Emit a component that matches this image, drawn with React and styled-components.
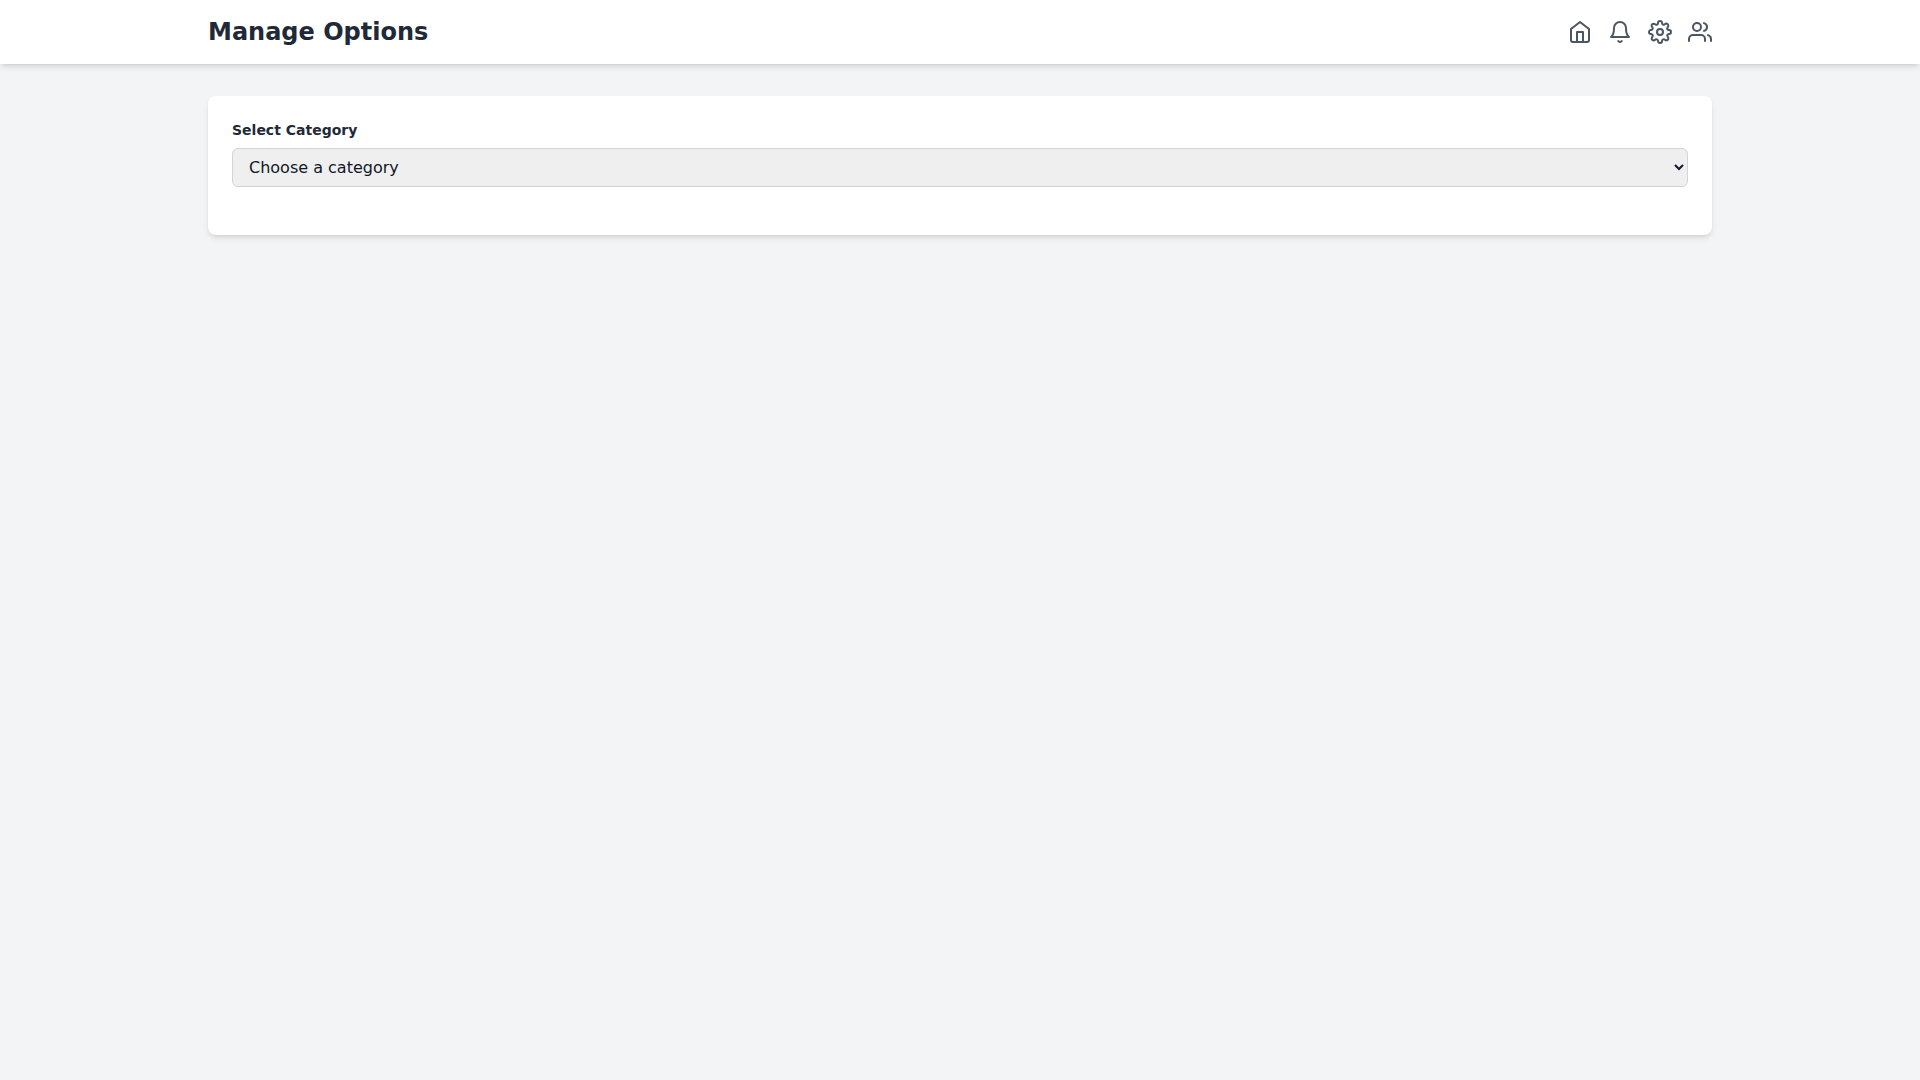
import { useState } from 'react';
import styled, { createGlobalStyle } from 'styled-components';
import { FiHome, FiBell, FiSettings, FiUsers } from 'react-icons/fi';

const GlobalStyle = createGlobalStyle`
  *,
  *::before,
  *::after {
    box-sizing: border-box;
  }

  body {
    margin: 0;
    font-family: 'DejaVu Sans', sans-serif;
    line-height: 1.5;
    color: #1f2937;
    background-color: #f3f4f6;
  }
`;

const Header = styled.header`
  background-color: #ffffff;
  box-shadow: 0 4px 6px -1px rgba(0, 0, 0, 0.1),
    0 2px 4px -2px rgba(0, 0, 0, 0.1);
`;

const HeaderInner = styled.div`
  display: flex;
  justify-content: space-between;
  align-items: center;
  max-width: 1536px;
  margin: 0 auto;
  padding: 16px;
`;

const Title = styled.h1`
  margin: 0;
  font-size: 24px;
  line-height: 32px;
  font-weight: 700;
`;

const Nav = styled.nav`
  display: flex;
  column-gap: 16px;
`;

const NavLink = styled.a`
  display: flex;
  color: #4b5563;

  &:hover {
    color: #1f2937;
  }
`;

const Main = styled.main`
  max-width: 1536px;
  margin: 0 auto;
  padding: 32px 16px;
`;

const Card = styled.section`
  padding: 24px;
  background-color: #ffffff;
  border-radius: 8px;
  box-shadow: 0 4px 6px -1px rgba(0, 0, 0, 0.1),
    0 2px 4px -2px rgba(0, 0, 0, 0.1);
`;

const Field = styled.div`
  margin-bottom: 24px;
`;

const Label = styled.label`
  display: block;
  margin-bottom: 8px;
  font-size: 14px;
  line-height: 20px;
  font-weight: 700;
`;

const Select = styled.select`
  display: block;
  width: 100%;
  padding: 8px 12px;
  font-family: inherit;
  font-size: 16px;
  line-height: 24px;
  color: #111827;
  background-color: #efefef;
  border: 1px solid #d1d5db;
  border-radius: 6px;
`;

const links = [
  { name: 'Home', href: '#home', Icon: FiHome },
  { name: 'Notifications', href: '#notifications', Icon: FiBell },
  { name: 'Settings', href: '#settings', Icon: FiSettings },
  { name: 'Users', href: '#users', Icon: FiUsers },
];

const App = () => {
  const [category, setCategory] = useState('');

  return (
    <>
      <GlobalStyle />
      <Header>
        <HeaderInner>
          <Title>Manage Options</Title>
          <Nav>
            {links.map(({ name, href, Icon }) => (
              <NavLink key={name} href={href} aria-label={name}>
                <Icon size={24} />
              </NavLink>
            ))}
          </Nav>
        </HeaderInner>
      </Header>
      <Main>
        <Card>
          <Field>
            <Label htmlFor="category">Select Category</Label>
            <Select
              id="category"
              value={category}
              onChange={e => setCategory(e.target.value)}
            >
              <option value="">Choose a category</option>
            </Select>
          </Field>
        </Card>
      </Main>
    </>
  );
};

export default App;
